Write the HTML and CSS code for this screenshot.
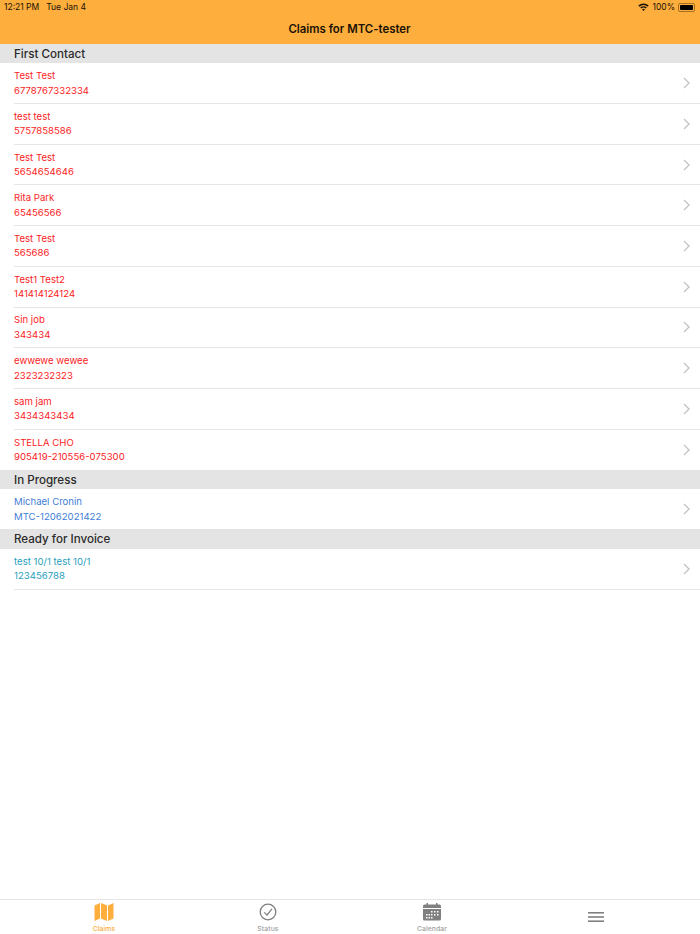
FILE: index.html
```html
<!DOCTYPE html>
<html lang="en">
<head>
    <meta charset="UTF-8">
    <meta name="viewport" content="width=device-width, initial-scale=1.0">
    <title>Claims</title>
    <link rel="stylesheet" href="styles.css">
</head>
<body>
    <div class="app">
        <div class="header">
            <div class="status-bar">
                <span class="status-time">12:21 PM</span>
                <span class="status-date">Tue Jan 4</span>
                <span class="status-right">
                    <svg class="wifi" width="11" height="8" viewBox="0 0 11 8">
                        <path d="M0.3 2.6 A7.4 7.4 0 0 1 10.7 2.6 L9.6 3.7 A5.8 5.8 0 0 0 1.4 3.7 Z" fill="#1a1205"/>
                        <path d="M2.2 4.5 A4.7 4.7 0 0 1 8.8 4.5 L7.7 5.6 A3.1 3.1 0 0 0 3.3 5.6 Z" fill="#1a1205"/>
                        <path d="M4.1 6.4 A2 2 0 0 1 6.9 6.4 L5.5 7.9 Z" fill="#1a1205"/>
                    </svg>
                    <span>100%</span>
                    <span class="battery"><span class="battery-fill"></span></span>
                </span>
            </div>
            <div class="title">Claims for MTC-tester</div>
        </div>

        <div class="list">
            <div class="section-title">First Contact</div>
            <a class="row red"><div class="row-text"><p>Test Test</p><p>6778767332334</p></div><svg class="chevron" width="7" height="12" viewBox="0 0 7 12"><path d="M1 1 L6 6 L1 11" /></svg></a>
            <a class="row red"><div class="row-text"><p>test test</p><p>5757858586</p></div><svg class="chevron" width="7" height="12" viewBox="0 0 7 12"><path d="M1 1 L6 6 L1 11" /></svg></a>
            <a class="row red"><div class="row-text"><p>Test Test</p><p>5654654646</p></div><svg class="chevron" width="7" height="12" viewBox="0 0 7 12"><path d="M1 1 L6 6 L1 11" /></svg></a>
            <a class="row red"><div class="row-text"><p>Rita Park</p><p>65456566</p></div><svg class="chevron" width="7" height="12" viewBox="0 0 7 12"><path d="M1 1 L6 6 L1 11" /></svg></a>
            <a class="row red"><div class="row-text"><p>Test Test</p><p>565686</p></div><svg class="chevron" width="7" height="12" viewBox="0 0 7 12"><path d="M1 1 L6 6 L1 11" /></svg></a>
            <a class="row red"><div class="row-text"><p>Test1 Test2</p><p>141414124124</p></div><svg class="chevron" width="7" height="12" viewBox="0 0 7 12"><path d="M1 1 L6 6 L1 11" /></svg></a>
            <a class="row red"><div class="row-text"><p>Sin job</p><p>343434</p></div><svg class="chevron" width="7" height="12" viewBox="0 0 7 12"><path d="M1 1 L6 6 L1 11" /></svg></a>
            <a class="row red"><div class="row-text"><p>ewwewe wewee</p><p>2323232323</p></div><svg class="chevron" width="7" height="12" viewBox="0 0 7 12"><path d="M1 1 L6 6 L1 11" /></svg></a>
            <a class="row red"><div class="row-text"><p>sam jam</p><p>3434343434</p></div><svg class="chevron" width="7" height="12" viewBox="0 0 7 12"><path d="M1 1 L6 6 L1 11" /></svg></a>
            <a class="row red last"><div class="row-text"><p>STELLA CHO</p><p>905419-210556-075300</p></div><svg class="chevron" width="7" height="12" viewBox="0 0 7 12"><path d="M1 1 L6 6 L1 11" /></svg></a>

            <div class="section-title">In Progress</div>
            <a class="row blue last"><div class="row-text"><p>Michael Cronin</p><p>MTC-12062021422</p></div><svg class="chevron" width="7" height="12" viewBox="0 0 7 12"><path d="M1 1 L6 6 L1 11" /></svg></a>

            <div class="section-title">Ready for Invoice</div>
            <a class="row teal"><div class="row-text"><p>test 10/1 test 10/1</p><p>123456788</p></div><svg class="chevron" width="7" height="12" viewBox="0 0 7 12"><path d="M1 1 L6 6 L1 11" /></svg></a>
        </div>

        <div class="tabbar">
            <div class="tab active">
                <svg width="20" height="20" viewBox="0 0 20 20">
                    <path d="M0.5 3.5 L6 1 V16.5 L0.5 19 Z M7 1 L13 3.5 V19 L7 16.5 Z M14 3.5 L19.5 1 V16.5 L14 19 Z" fill="#fdae3d"/>
                </svg>
                <span>Claims</span>
            </div>
            <div class="tab">
                <svg width="20" height="20" viewBox="0 0 20 20">
                    <circle cx="10" cy="10" r="7.8" fill="none" stroke="#808080" stroke-width="1.3"/>
                    <path d="M6.2 10.4 L9 13 L14 6.8" fill="none" stroke="#808080" stroke-width="1.2"/>
                </svg>
                <span>Status</span>
            </div>
            <div class="tab">
                <svg width="20" height="20" viewBox="0 0 20 20">
                    <path d="M1 4 Q1 2.5 2.5 2.5 H17.5 Q19 2.5 19 4 V6 H1 Z M1 7 H19 V17 Q19 18.5 17.5 18.5 H2.5 Q1 18.5 1 17 Z" fill="#808080"/>
                    <rect x="4.5" y="1" width="1.5" height="2.5" fill="#808080"/>
                    <rect x="14" y="1" width="1.5" height="2.5" fill="#808080"/>
                    <path d="M9 9 h1.5 v1.5 h-1.5 Z M12 9 h1.5 v1.5 h-1.5 Z M15 9 h1.5 v1.5 h-1.5 Z M4 12 h1.5 v1.5 h-1.5 Z M6.5 12 h1.5 v1.5 h-1.5 Z M9 12 h1.5 v1.5 h-1.5 Z M12 12 h1.5 v1.5 h-1.5 Z M15 12 h1.5 v1.5 h-1.5 Z M4 15 h1.5 v1.5 h-1.5 Z M6.5 15 h1.5 v1.5 h-1.5 Z M9 15 h1.5 v1.5 h-1.5 Z" fill="#fff"/>
                </svg>
                <span>Calendar</span>
            </div>
            <div class="tab menu-tab">
                <svg width="16" height="10" viewBox="0 0 16 10">
                    <rect width="16" height="1.6" y="0" fill="#808080"/>
                    <rect width="16" height="1.6" y="4.2" fill="#808080"/>
                    <rect width="16" height="1.6" y="8.4" fill="#808080"/>
                </svg>
            </div>
        </div>
    </div>
</body>
</html>
```

FILE: styles.css
```css
html, body {
    margin: 0;
    padding: 0;
    height: 100%;
}

body {
    font-family: Inter, "Liberation Sans", sans-serif;
    background: #ffffff;
}

p {
    margin: 0;
}

.app {
    display: flex;
    flex-direction: column;
    height: 934px;
    overflow: hidden;
}

.header {
    height: 44px;
    flex-shrink: 0;
    background: #fdae3d;
    box-sizing: border-box;
    padding: 0 5px 0 4px;
    color: #1a1205;
}

.status-bar {
    display: flex;
    align-items: center;
    height: 14px;
    font-size: 8.5px;
}

.status-date {
    margin-left: 7px;
}

.status-right {
    margin-left: auto;
    display: flex;
    align-items: center;
    gap: 3px;
}

.battery {
    display: block;
    box-sizing: border-box;
    width: 17px;
    height: 9px;
    padding: 1px;
    border: 1px solid rgba(60, 40, 0, 0.45);
    border-radius: 2px;
}

.battery-fill {
    display: block;
    height: 100%;
    background: #000;
    border-radius: 1px;
}

.title {
    text-align: center;
    font-size: 11.4px;
    font-weight: 600;
    line-height: 30px;
}

.list {
    flex: 1;
}

.section-title {
    height: 19.4px;
    line-height: 20px;
    background: #e4e4e4;
    color: #2b2b2b;
    font-size: 11.6px;
    font-weight: 500;
    padding-left: 14px;
}

.row {
    display: flex;
    align-items: center;
    justify-content: space-between;
    height: 40.7px;
    box-sizing: border-box;
    margin-left: 14px;
    padding-right: 10px;
    border-bottom: 1px solid #e6e6e6;
    font-size: 9.6px;
    line-height: 14.4px;
}

.row-text {
    padding-top: 1px;
}

.row.last {
    height: 40.1px;
    border-bottom: none;
}

.red { color: #fc1c24; }
.blue { color: #3f80d8; }
.teal { color: #2a9fbc; height: 41px; }

.chevron path {
    fill: none;
    stroke: #c4c4c4;
    stroke-width: 1.4;
}

.tabbar {
    display: flex;
    height: 35px;
    box-sizing: border-box;
    flex-shrink: 0;
    border-top: 1px solid #e4e4e4;
    padding: 0 22px;
}

.tab {
    flex: 1;
    display: flex;
    flex-direction: column;
    align-items: center;
    padding-top: 2px;
    font-size: 6.8px;
    font-weight: 500;
    letter-spacing: 0.1px;
    color: #a0a0a0;
}

.tab span {
    margin-top: 2px;
}

.tab.active {
    color: #fdae3d;
}

.menu-tab {
    justify-content: center;
    padding-top: 0;
}
```
